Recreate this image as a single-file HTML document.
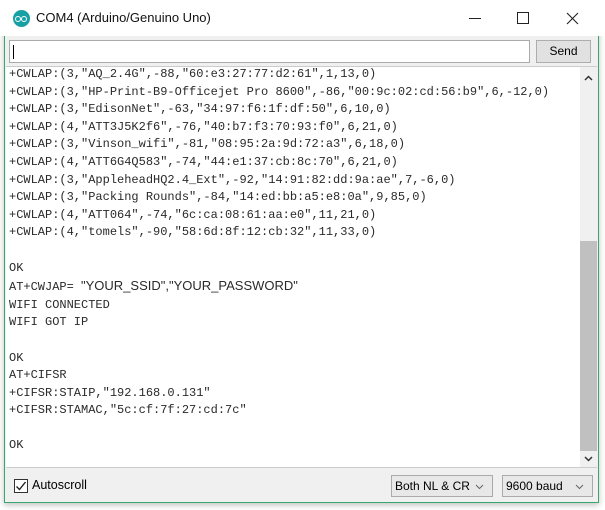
<!DOCTYPE html>
<html><head><style>
*{margin:0;padding:0;box-sizing:border-box}
body{width:605px;height:510px;background:#fff;position:relative;overflow:hidden;font-family:"Liberation Sans",sans-serif}
.win{position:absolute;left:4px;top:0;width:595px;height:503px;border:1px solid #3aa56c;border-top:none;background:#f0f0f0;box-shadow:0 2px 6px rgba(0,0,0,.25)}
.title{position:absolute;left:0;top:0;width:605px;height:36px;background:#fff}
.title .t{position:absolute;left:36px;top:10px;font-size:13px;color:#111}
.logo{position:absolute;left:13px;top:10px;width:17px;height:17px;border-radius:50%;background:#17a1a5}
.logo:before,.logo:after{content:"";position:absolute;top:6px;width:4px;height:4px;border:1.3px solid #fff;border-radius:50%}
.logo:before{left:2px}.logo:after{left:8px}
.inp{position:absolute;left:9px;top:40px;width:521px;height:23px;background:#fff;border:1px solid #aaa}
.inp:before{content:"";position:absolute;left:3px;top:4px;width:1px;height:14px;background:#000}
.send{position:absolute;left:536px;top:40px;width:55px;height:23px;background:#e1e1e1;border:1px solid #adadad;font-size:12px;text-align:center;line-height:21px}
.area{position:absolute;left:6px;top:66px;width:591px;height:402px;background:#fff;border-top:1px solid #ccc;border-bottom:1px solid #ccc}
pre{position:absolute;left:3px;top:-1px;font-family:"Liberation Mono",monospace;font-size:12px;line-height:17.6px;color:#2a2a2a}
.sans{font-family:"Liberation Sans",sans-serif;font-size:13px}
.sb{position:absolute;left:574px;top:0;width:17px;height:400px;background:#f0f0f0}
.thumb{position:absolute;left:0;top:174px;width:17px;height:210px;background:#c0c0c0}
.lbl{position:absolute;left:32px;top:478px;font-size:12.5px}
.cb{position:absolute;left:14px;top:479px;width:14px;height:14px;border:1px solid #333;background:#fff}
.dd{position:absolute;top:475px;height:22px;border:1px solid #aaa;background:#e8e8e8;font-size:12px;line-height:20px;padding-left:3px}
</style></head><body>
<div class="win"></div>
<div class="title"><div class="logo"></div><div class="t">COM4 (Arduino/Genuino Uno)</div>
<div style="position:absolute;left:469px;top:18px;width:12px;height:1px;background:#222"></div>
<div style="position:absolute;left:517px;top:12px;width:12px;height:12px;border:1px solid #222"></div>
<svg style="position:absolute;left:566px;top:12px" width="13" height="13" viewBox="0 0 13 13"><path d="M1 1L12 12M12 1L1 12" stroke="#222" stroke-width="1.1"/></svg></div>
<div class="inp"></div>
<div class="send">Send</div>
<div class="area">
<pre>+CWLAP:(3,"AQ_2.4G",-88,"60:e3:27:77:d2:61",1,13,0)
+CWLAP:(3,"HP-Print-B9-Officejet Pro 8600",-86,"00:9c:02:cd:56:b9",6,-12,0)
+CWLAP:(3,"EdisonNet",-63,"34:97:f6:1f:df:50",6,10,0)
+CWLAP:(4,"ATT3J5K2f6",-76,"40:b7:f3:70:93:f0",6,21,0)
+CWLAP:(3,"Vinson_wifi",-81,"08:95:2a:9d:72:a3",6,18,0)
+CWLAP:(4,"ATT6G4Q583",-74,"44:e1:37:cb:8c:70",6,21,0)
+CWLAP:(3,"AppleheadHQ2.4_Ext",-92,"14:91:82:dd:9a:ae",7,-6,0)
+CWLAP:(3,"Packing Rounds",-84,"14:ed:bb:a5:e8:0a",9,85,0)
+CWLAP:(4,"ATT064",-74,"6c:ca:08:61:aa:e0",11,21,0)
+CWLAP:(4,"tomels",-90,"58:6d:8f:12:cb:32",11,33,0)

OK
AT+CWJAP= <span class="sans">"YOUR_SSID","YOUR_PASSWORD"</span>
WIFI CONNECTED
WIFI GOT IP

OK
AT+CIFSR
+CIFSR:STAIP,"192.168.0.131"
+CIFSR:STAMAC,"5c:cf:7f:27:cd:7c"

OK</pre>
<div class="sb">
<svg style="position:absolute;left:4px;top:8px" width="9" height="6" viewBox="0 0 9 6"><path d="M1 5L4.5 1.5L8 5" fill="none" stroke="#333" stroke-width="1.5"/></svg>
<div class="thumb"></div>
<svg style="position:absolute;left:4px;top:389px" width="9" height="6" viewBox="0 0 9 6"><path d="M1 1L4.5 4.5L8 1" fill="none" stroke="#333" stroke-width="1.5"/></svg>
</div>
</div>
<div class="cb"><svg width="14" height="14" viewBox="0 0 14 14" style="position:absolute;left:-1px;top:-1px"><path d="M2.5 7.5 L5.5 10.5 L11.5 3" fill="none" stroke="#222" stroke-width="1.4"/></svg></div>
<div class="lbl">Autoscroll</div>
<div class="dd" style="left:391px;width:102px">Both NL &amp; CR<svg style="position:absolute;right:8px;top:8px" width="9" height="6" viewBox="0 0 9 6"><path d="M1 1L4.5 4.5L8 1" fill="none" stroke="#666" stroke-width="1"/></svg></div>
<div class="dd" style="left:502px;width:91px">9600 baud<svg style="position:absolute;right:8px;top:8px" width="9" height="6" viewBox="0 0 9 6"><path d="M1 1L4.5 4.5L8 1" fill="none" stroke="#666" stroke-width="1"/></svg></div>
</body></html>
